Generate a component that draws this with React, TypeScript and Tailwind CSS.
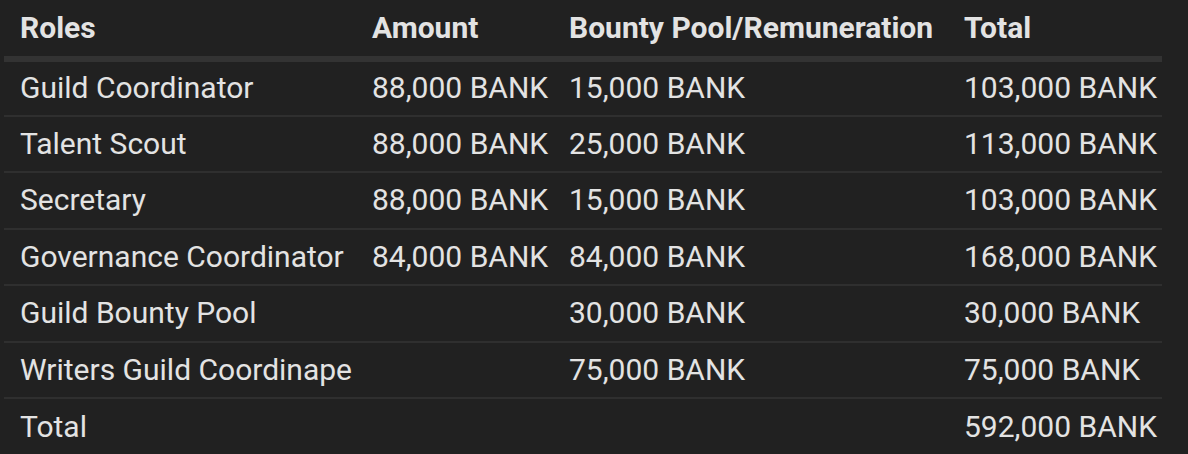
import React from 'react';

interface Row {
  role: string;
  amount?: string;
  bounty?: string;
  total: string;
}

const rows: Row[] = [
  { role: 'Guild Coordinator', amount: '88,000 BANK', bounty: '15,000 BANK', total: '103,000 BANK' },
  { role: 'Talent Scout', amount: '88,000 BANK', bounty: '25,000 BANK', total: '113,000 BANK' },
  { role: 'Secretary', amount: '88,000 BANK', bounty: '15,000 BANK', total: '103,000 BANK' },
  { role: 'Governance Coordinator', amount: '84,000 BANK', bounty: '84,000 BANK', total: '168,000 BANK' },
  { role: 'Guild Bounty Pool', bounty: '30,000 BANK', total: '30,000 BANK' },
  { role: 'Writers Guild Coordinape', bounty: '75,000 BANK', total: '75,000 BANK' },
  { role: 'Total', total: '592,000 BANK' },
];

export default function App() {
  return (
    <div className="w-[1188px] h-[454px] bg-[#212121] overflow-hidden pl-[4px] pr-[26px] font-['Roboto',sans-serif] text-[#e3e3e3] text-[30px] leading-[36px]">
      <table className="w-full table-fixed border-collapse">
        <colgroup>
          <col className="w-[352px]" />
          <col className="w-[197px]" />
          <col className="w-[395px]" />
          <col />
        </colgroup>
        <thead>
          <tr className="h-[59px] border-b-[6px] border-[#333333]">
            <th className="text-left font-bold pl-4 pb-[1px] whitespace-nowrap">Roles</th>
            <th className="text-left font-bold pl-4 pb-[1px] whitespace-nowrap">Amount</th>
            <th className="text-left font-bold pl-4 pb-[1px] whitespace-nowrap">Bounty Pool/Remuneration</th>
            <th className="text-left font-bold pl-4 pb-[1px] whitespace-nowrap">Total</th>
          </tr>
        </thead>
        <tbody>
          {rows.map((r, i) => (
            <tr
              key={r.role}
              className={i < rows.length - 1 ? 'h-[56.5px] border-b-2 border-[#2f2f2f]' : 'h-[56px]'}
            >
              <td className="pl-4 whitespace-nowrap">{r.role}</td>
              <td className="pl-4 whitespace-nowrap">{r.amount ?? ''}</td>
              <td className="pl-4 whitespace-nowrap">{r.bounty ?? ''}</td>
              <td className="pl-4 whitespace-nowrap">{r.total}</td>
            </tr>
          ))}
        </tbody>
      </table>
    </div>
  );
}
